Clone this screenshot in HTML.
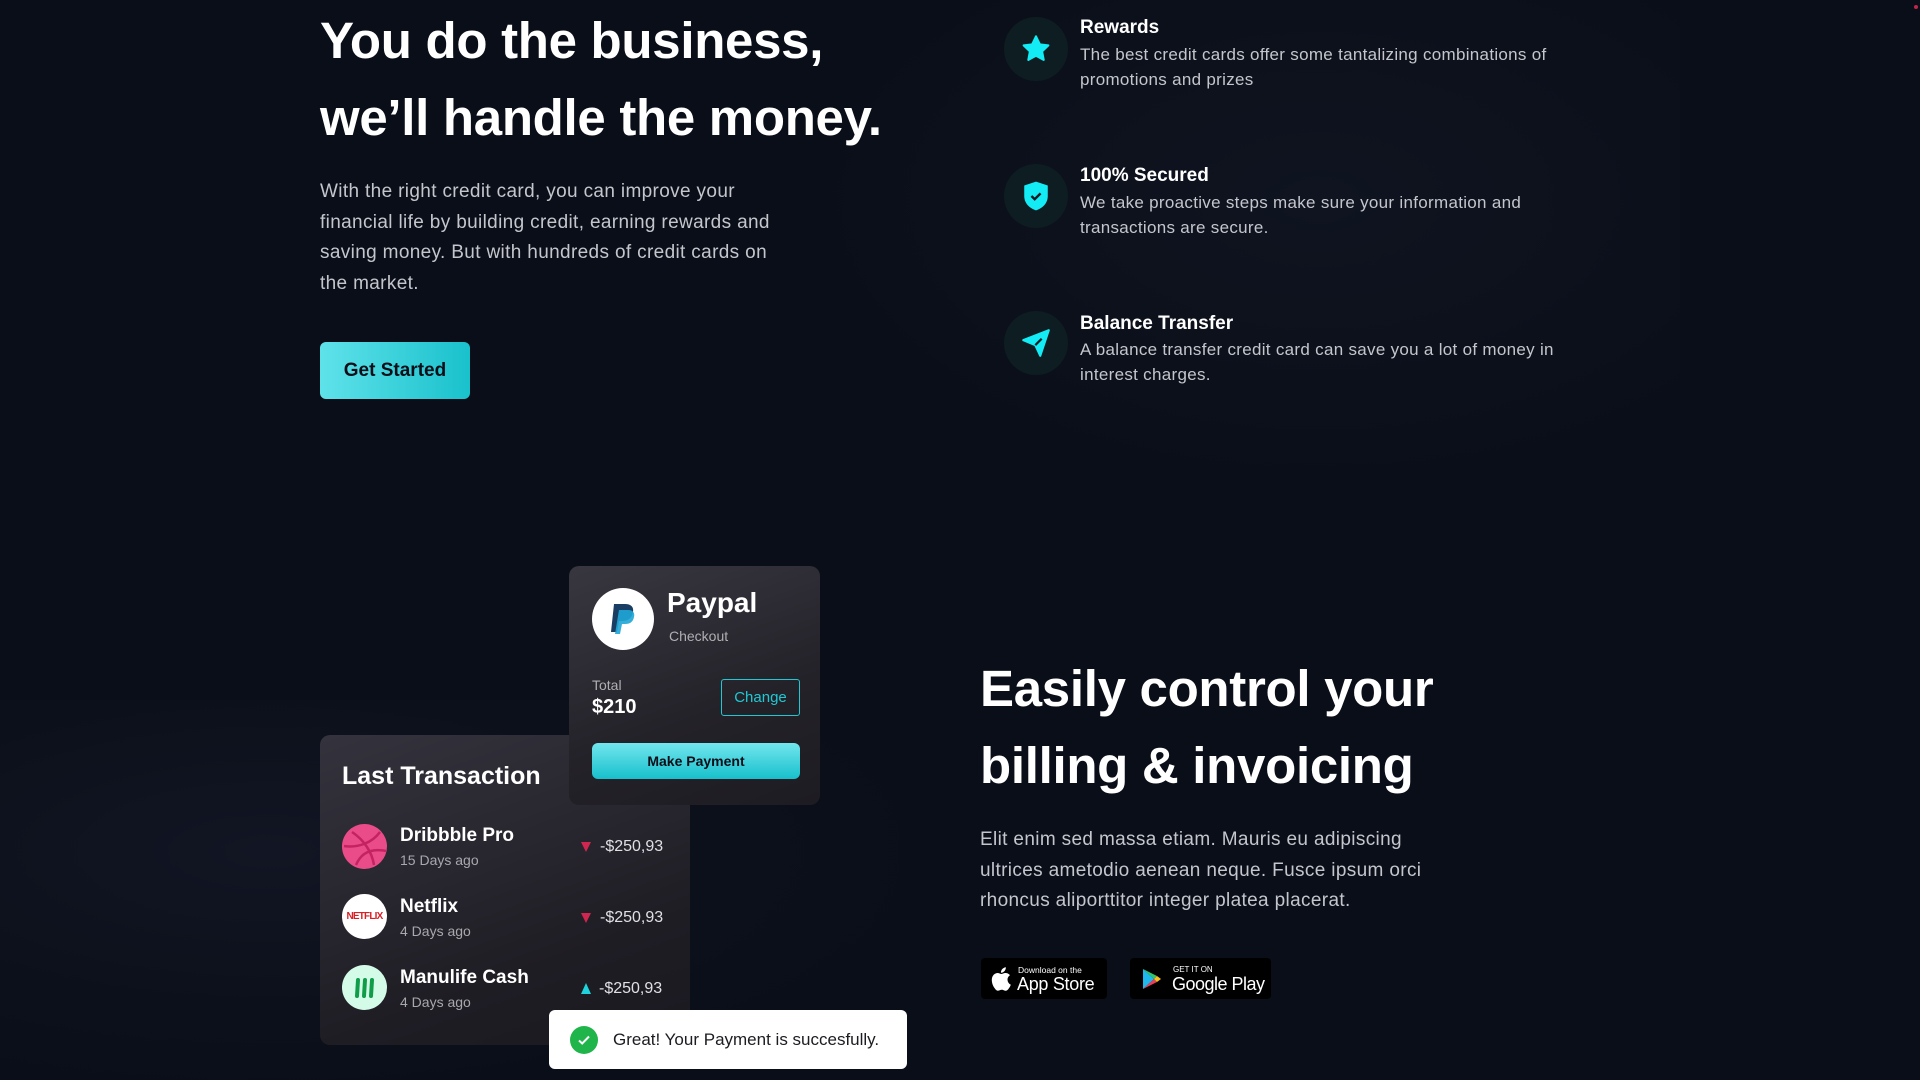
<!DOCTYPE html>
<html style="width:1920px;height:1080px;overflow:hidden"><head><meta charset="utf-8"><style>
*{margin:0;padding:0;box-sizing:border-box}
body{width:1920px;height:1080px;overflow:hidden;background:#0a0e18;font-family:"Liberation Sans",sans-serif;color:#fff;position:relative}
.bg1{position:absolute;left:0;top:700px;width:900px;height:380px;background:radial-gradient(ellipse at 30% 40%,#121624 0%,#0c101a 50%,transparent 80%);}
.bg2{position:absolute;left:780px;top:0;width:900px;height:500px;background:radial-gradient(ellipse at 60% 40%,#0f1420 0%,transparent 70%);}
.abs{position:absolute;white-space:nowrap}
h1{font-weight:700;font-size:51px;line-height:77px;letter-spacing:-0.3px}
.p{color:#c4c6cc;font-size:19px;line-height:30.6px;letter-spacing:0.35px}
.btn{left:320px;top:342px;width:150px;height:57px;border-radius:6px;background:linear-gradient(90deg,#5fe2ea,#19c1cc);color:#0a0e18;font-size:19px;font-weight:700;display:flex;align-items:center;justify-content:center}
.ic{width:64px;height:64px;border-radius:50%;background:#0d1d22;left:1004px;display:flex;align-items:center;justify-content:center}
.ft{left:1080px;font-size:19px;font-weight:700}
.fd{left:1080px;font-size:17px;line-height:24.5px;color:#c4c6cc;letter-spacing:0.3px}
.card{border-radius:10px;background:linear-gradient(160deg,#34323c,#1f1d24 70%,#1a1920)}
.tn{font-size:19px;font-weight:700}
.ts{font-size:14px;color:#a9a8ae}
.amt{font-size:16px;color:#e0e0e4}
.av{width:45px;height:45px;border-radius:50%;left:342px}
</style></head><body>
<div class="bg1"></div><div class="bg2"></div>
<div style="position:absolute;right:2px;top:5px;width:4px;height:4px;border-radius:50%;background:#c0264a"></div>

<h1 class="abs" style="left:320px;top:2px">You do the business,<br>we’ll handle the money.</h1>
<div class="abs p" style="left:320px;top:177px">With the right credit card, you can improve your<br>financial life by building credit, earning rewards and<br>saving money. But with hundreds of credit cards on<br>the market.</div>
<div class="abs btn">Get Started</div>

<div class="abs ic" style="top:17px"><svg width="32" height="32" viewBox="0 0 24 24"><path d="M12 2.5l2.9 6 6.4.8-4.7 4.5 1.2 6.4L12 17.1l-5.8 3.1 1.2-6.4-4.7-4.5 6.4-.8z" fill="#14ecf5" stroke="#14ecf5" stroke-width="1.5" stroke-linejoin="round"/></svg></div>
<div class="abs ft" style="top:17px">Rewards</div>
<div class="abs fd" style="top:43px">The best credit cards offer some tantalizing combinations of<br>promotions and prizes</div>

<div class="abs ic" style="top:164px"><svg width="32" height="34" viewBox="0 0 24 26"><path d="M12 2l9 3v8c0 6-4.5 9.5-9 11-4.5-1.5-9-5-9-11V5z" fill="#14ecf5"/><path d="M8.5 13l2.5 2.5 4.5-4.5" fill="none" stroke="#0a1a20" stroke-width="1.8"/></svg></div>
<div class="abs ft" style="top:165px">100% Secured</div>
<div class="abs fd" style="top:191px">We take proactive steps make sure your information and<br>transactions are secure.</div>

<div class="abs ic" style="top:311px"><svg width="34" height="34" viewBox="0 0 24 24"><path d="M3 10L21 3l-6 18-3.5-7.5z" fill="#14ecf5" stroke="#14ecf5" stroke-width="1.5" stroke-linejoin="round"/><path d="M11.5 13.5L16 9" stroke="#0d1d22" stroke-width="1.6"/></svg></div>
<div class="abs ft" style="top:313px">Balance Transfer</div>
<div class="abs fd" style="top:338px">A balance transfer credit card can save you a lot of money in<br>interest charges.</div>

<div class="abs card" style="left:320px;top:735px;width:370px;height:310px"></div>
<div class="abs" style="left:342px;top:762px;font-size:25px;font-weight:700">Last Transaction</div>
<div class="abs av" style="top:824px;background:#ea4c89;overflow:hidden"><svg width="45" height="45" viewBox="0 0 45 45"><g fill="none" stroke="#c32361" stroke-width="2.5"><path d="M10 8c12 8 20 20 22 33"/><path d="M2 22c14 2 28-3 36-14"/><path d="M14 41c5-12 15-17 30-14"/></g></svg></div>
<div class="abs tn" style="left:400px;top:825px">Dribbble Pro</div>
<div class="abs ts" style="left:400px;top:852px">15 Days ago</div>
<div class="abs" style="left:581px;top:842px;width:10px;height:10px;background:#d0264f;clip-path:polygon(0 0,100% 0,50% 100%)"></div>
<div class="abs amt" style="left:600px;top:838px">-$250,93</div>

<div class="abs av" style="top:894px;background:#fff;color:#d81f26;font-size:10px;font-weight:700;display:flex;align-items:center;justify-content:center;letter-spacing:-0.8px">NETFLIX</div>
<div class="abs tn" style="left:400px;top:896px">Netflix</div>
<div class="abs ts" style="left:400px;top:923px">4 Days ago</div>
<div class="abs" style="left:581px;top:913px;width:10px;height:10px;background:#d0264f;clip-path:polygon(0 0,100% 0,50% 100%)"></div>
<div class="abs amt" style="left:600px;top:909px">-$250,93</div>

<div class="abs av" style="top:965px;background:#d4fbe8;display:flex;align-items:center;justify-content:center"><svg width="26" height="26" viewBox="0 0 26 26"><g stroke="#0f9d4a" stroke-width="4" stroke-linecap="round"><path d="M6 5l-1 16"/><path d="M13 5l-1 16"/><path d="M20 5l-1 16"/></g></svg></div>
<div class="abs tn" style="left:400px;top:967px">Manulife Cash</div>
<div class="abs ts" style="left:400px;top:994px">4 Days ago</div>
<div class="abs" style="left:581px;top:983px;width:10px;height:11px;background:#1fd2dc;clip-path:polygon(50% 0,100% 100%,0 100%)"></div>
<div class="abs amt" style="left:599px;top:980px">-$250,93</div>

<div class="abs card" style="left:569px;top:566px;width:251px;height:239px;background:linear-gradient(160deg,#38363f,#242229 60%,#1d1c22)"></div>
<div class="abs" style="left:592px;top:588px;width:62px;height:62px;border-radius:50%;background:#fff;display:flex;align-items:center;justify-content:center"><svg width="30" height="34" viewBox="0 0 30 34"><path d="M6 2h11c6 0 9 3 8 8-1 6-5 9-11 9h-3l-2 11H3z" fill="#1a3e63"/><path d="M11 8h9c5 0 7 3 6 7-1 5-4 7-9 7h-3l-2 10H7z" fill="#1fa6d6" opacity=".9"/></svg></div>
<div class="abs" style="left:667px;top:587px;font-size:28px;font-weight:700">Paypal</div>
<div class="abs" style="left:669px;top:628px;font-size:14px;color:#b0afb4">Checkout</div>
<div class="abs" style="left:592px;top:677px;font-size:14px;color:#b0afb4">Total</div>
<div class="abs" style="left:592px;top:696px;font-size:20px;font-weight:700">$210</div>
<div class="abs" style="left:721px;top:679px;width:79px;height:37px;border:1.5px solid #1fc9d3;border-radius:3px;color:#1fc9d3;font-size:15px;display:flex;align-items:center;justify-content:center">Change</div>
<div class="abs" style="left:592px;top:743px;width:208px;height:36px;border-radius:6px;background:linear-gradient(180deg,#72e6ee,#16c0cc);color:#0a0e18;font-size:14px;font-weight:700;display:flex;align-items:center;justify-content:center">Make Payment</div>

<div class="abs" style="left:549px;top:1010px;width:358px;height:59px;border-radius:6px;background:#fff;display:flex;align-items:center;padding-left:21px;color:#1c1c22;font-size:17px">
<div style="width:28px;height:28px;border-radius:50%;background:#1fb54a;margin-right:15px;display:flex;align-items:center;justify-content:center"><svg width="16" height="16" viewBox="0 0 16 16"><path d="M3 8.5l3.2 3L13 4.5" fill="none" stroke="#fff" stroke-width="2"/></svg></div>Great! Your Payment is succesfully.</div>

<h1 class="abs" style="left:980px;top:650px">Easily control your<br>billing &amp; invoicing</h1>
<div class="abs p" style="left:980px;top:825px">Elit enim sed massa etiam. Mauris eu adipiscing<br>ultrices ametodio aenean neque. Fusce ipsum orci<br>rhoncus aliporttitor integer platea placerat.</div>

<div class="abs" style="left:981px;top:958px;width:126px;height:41px;background:#000;border-radius:4px">
<svg class="abs" style="left:10px;top:9px" width="20" height="24" viewBox="0 0 20 24"><path d="M16.5 12.7c0-3 2.4-4.3 2.5-4.4-1.4-2-3.5-2.3-4.2-2.3-1.8-.2-3.5 1-4.4 1-.9 0-2.3-1-3.8-1C4.6 6.1 2.8 7.2 1.8 9c-2.1 3.6-.5 8.9 1.5 11.8 1 1.4 2.1 3 3.7 3 1.5-.1 2-1 3.8-1s2.3 1 3.8 1c1.6 0 2.6-1.4 3.6-2.9 1.1-1.6 1.6-3.2 1.6-3.3-.1 0-3.1-1.2-3.3-4.9zM13.6 4c.8-1 1.4-2.4 1.2-3.8-1.2.1-2.6.8-3.5 1.8-.8.9-1.5 2.3-1.3 3.7 1.3.1 2.7-.7 3.6-1.7z" fill="#fff"/></svg>
<div class="abs" style="left:37px;top:7px;font-size:8.5px">Download on the</div>
<div class="abs" style="left:36px;top:16px;font-size:18px;letter-spacing:-0.3px">App Store</div></div>

<div class="abs" style="left:1130px;top:958px;width:141px;height:41px;background:#000;border-radius:4px">
<svg class="abs" style="left:11px;top:10px" width="22" height="22" viewBox="0 0 22 22"><path d="M2 1l11 10L2 21z" fill="#1fb8ee"/><path d="M2 1l14 7-3 3z" fill="#34c46c"/><path d="M2 21l14-7-3-3z" fill="#e8405a"/><path d="M16 8l4 3-4 3-3-3z" fill="#f7c01c"/></svg>
<div class="abs" style="left:43px;top:7px;font-size:8px">GET IT ON</div>
<div class="abs" style="left:42px;top:16px;font-size:18px;letter-spacing:-0.5px">Google Play</div></div>
</body></html>
